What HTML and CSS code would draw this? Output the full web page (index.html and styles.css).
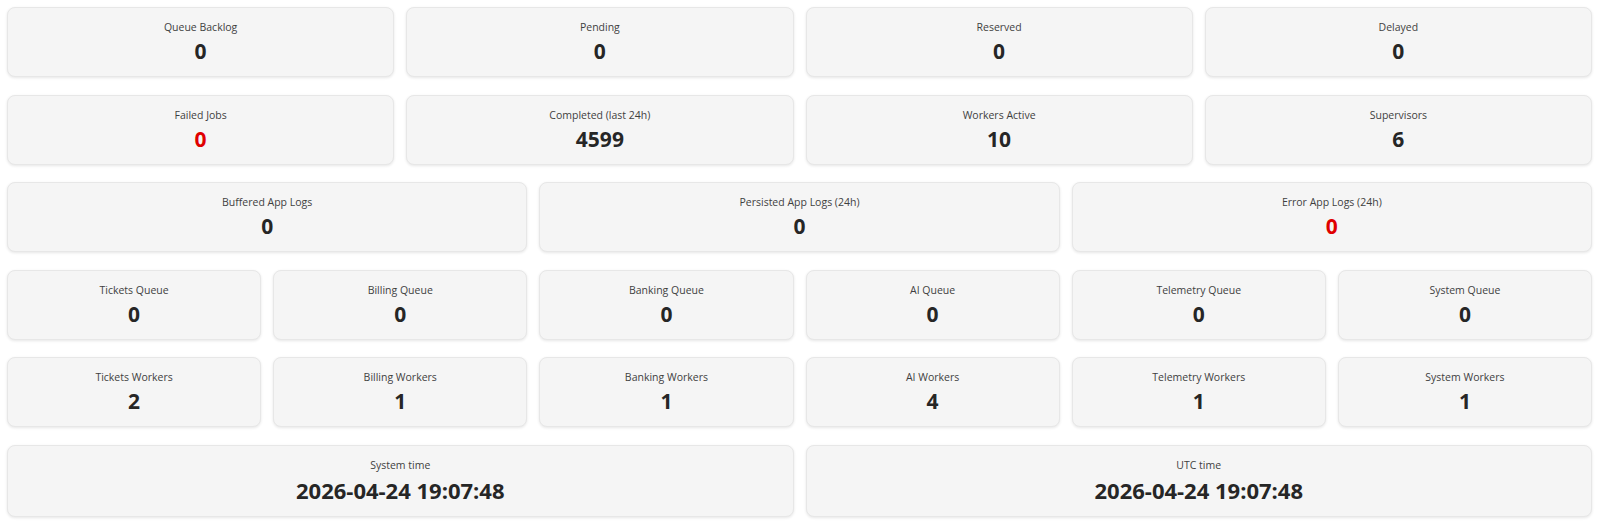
FILE: index.html
```html
<!DOCTYPE html>
<html>
<head>
<meta charset="utf-8">
<link rel="stylesheet" href="styles.css">
</head>
<body>
<div class="dash">
  <div class="row cols-4">
    <div class="card"><div class="label">Queue Backlog</div><div class="value">0</div></div>
    <div class="card"><div class="label">Pending</div><div class="value">0</div></div>
    <div class="card"><div class="label">Reserved</div><div class="value">0</div></div>
    <div class="card"><div class="label">Delayed</div><div class="value">0</div></div>
  </div>
  <div class="row cols-4">
    <div class="card"><div class="label">Failed Jobs</div><div class="value danger">0</div></div>
    <div class="card"><div class="label">Completed (last 24h)</div><div class="value">4599</div></div>
    <div class="card"><div class="label">Workers Active</div><div class="value">10</div></div>
    <div class="card"><div class="label">Supervisors</div><div class="value">6</div></div>
  </div>
  <div class="row cols-3">
    <div class="card"><div class="label">Buffered App Logs</div><div class="value">0</div></div>
    <div class="card"><div class="label">Persisted App Logs (24h)</div><div class="value">0</div></div>
    <div class="card"><div class="label">Error App Logs (24h)</div><div class="value danger">0</div></div>
  </div>
  <div class="row cols-6">
    <div class="card"><div class="label">Tickets Queue</div><div class="value">0</div></div>
    <div class="card"><div class="label">Billing Queue</div><div class="value">0</div></div>
    <div class="card"><div class="label">Banking Queue</div><div class="value">0</div></div>
    <div class="card"><div class="label">AI Queue</div><div class="value">0</div></div>
    <div class="card"><div class="label">Telemetry Queue</div><div class="value">0</div></div>
    <div class="card"><div class="label">System Queue</div><div class="value">0</div></div>
  </div>
  <div class="row cols-6">
    <div class="card"><div class="label">Tickets Workers</div><div class="value">2</div></div>
    <div class="card"><div class="label">Billing Workers</div><div class="value">1</div></div>
    <div class="card"><div class="label">Banking Workers</div><div class="value">1</div></div>
    <div class="card"><div class="label">AI Workers</div><div class="value">4</div></div>
    <div class="card"><div class="label">Telemetry Workers</div><div class="value">1</div></div>
    <div class="card"><div class="label">System Workers</div><div class="value">1</div></div>
  </div>
  <div class="row cols-2">
    <div class="card"><div class="label">System time</div><div class="value time">2026-04-24 19:07:48</div></div>
    <div class="card"><div class="label">UTC time</div><div class="value time">2026-04-24 19:07:48</div></div>
  </div>
</div>
</body>
</html>
```

FILE: styles.css
```css
html, body {
  margin: 0;
  padding: 0;
  background: #ffffff;
}
body {
  font-family: "Open Sans", "Noto Sans", sans-serif;
  color: #222222;
}
.dash {
  padding: 7px 7px;
  display: flex;
  flex-direction: column;
  gap: 17.5px;
}
.row {
  display: grid;
  column-gap: 12px;
}
.cols-2 { grid-template-columns: repeat(2, 1fr); }
.cols-3 { grid-template-columns: repeat(3, 1fr); }
.cols-4 { grid-template-columns: repeat(4, 1fr); }
.cols-6 { grid-template-columns: repeat(6, 1fr); }
.card {
  background: #f5f5f5;
  border: 1px solid #e7e7e7;
  border-radius: 8px;
  box-shadow: 0 1px 3px rgba(0, 0, 0, 0.10);
  padding: 11px 10px;
  text-align: center;
}
.label {
  font-size: 10.5px;
  line-height: 16px;
  font-weight: 500;
  color: #3f3f3f;
}
.value {
  margin-top: 2px;
  font-size: 21px;
  line-height: 28px;
  font-weight: 700;
  color: #262626;
}
.value.danger {
  color: #e00000;
}
.value.time {
  font-size: 22px;
  line-height: 30px;
}
```
